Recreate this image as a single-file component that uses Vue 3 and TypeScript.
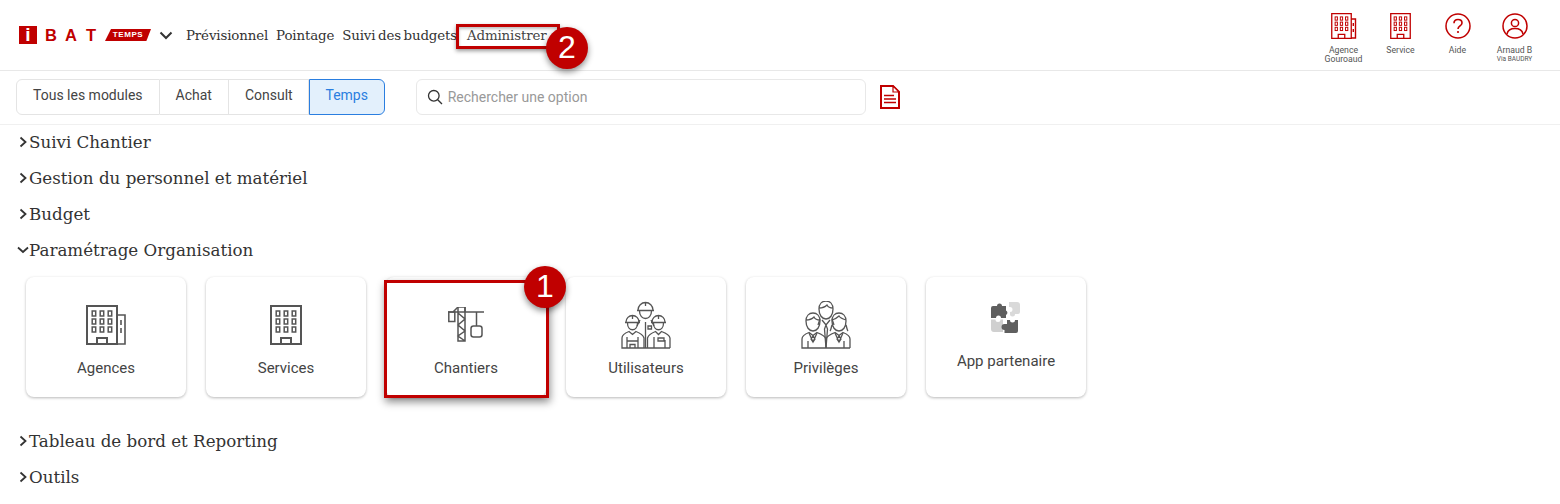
<template>
  <div class="page">
    <svg width="0" height="0" class="defs">
      <symbol id="tower" viewBox="0 0 32 40">
        <path d="M1 39V1h30v38z" fill="none" stroke="currentColor" stroke-width="2" />
        <path d="M11 39v-6h10v6" fill="none" stroke="currentColor" stroke-width="2" />
        <g fill="none" stroke="currentColor" stroke-width="1.5">
          <rect v-for="w in towerWindows" :key="w.k" :x="w.x" :y="w.y" width="3.5" height="5" />
        </g>
      </symbol>
    </svg>

    <header class="topbar">
      <div class="logo">
        <span class="logo__i">i</span>
        <span class="logo__bat">B</span>
        <span class="logo__bat">A</span>
        <span class="logo__bat">T</span>
        <span class="logo__tag">TEMPS</span>
      </div>
      <svg class="logo-caret" width="14" height="9" viewBox="0 0 14 9">
        <path d="M1.5 1.5 7 7l5.5-5.5" fill="none" stroke="#333" stroke-width="2" />
      </svg>
      <nav class="mainnav">
        <a v-for="n in navItems" :key="n">{{ n }}</a>
      </nav>

      <div class="userbox">
        <div class="userbox__item">
          <svg class="top-ico" width="26" height="26" viewBox="0 0 26 26">
            <use href="#tower" x="0" y="0" width="21" height="26" />
            <path d="M20 6h4.5v19H20M22.3 10v3M22.3 16v3" fill="none" stroke="currentColor" stroke-width="1.4" />
          </svg>
          <span>Agence</span>
          <span>Gouroaud</span>
        </div>
        <div class="userbox__item">
          <svg class="top-ico" width="26" height="26" viewBox="0 0 26 26">
            <use href="#tower" x="2" y="0" width="21" height="26" />
          </svg>
          <span>Service</span>
        </div>
        <div class="userbox__item">
          <svg class="top-ico" width="26" height="26" viewBox="0 0 26 26">
            <circle cx="13" cy="13" r="12" fill="none" stroke="currentColor" stroke-width="1.5" />
            <path d="M9 10.2C9 7.8 10.8 6.5 13 6.5s4 1.4 4 3.4c0 3-4 3-4 6.1" fill="none" stroke="currentColor" stroke-width="1.6" />
            <circle cx="13" cy="19" r="1.1" fill="currentColor" />
          </svg>
          <span>Aide</span>
        </div>
        <div class="userbox__item">
          <svg class="top-ico" width="26" height="26" viewBox="0 0 26 26">
            <circle cx="13" cy="13" r="12" fill="none" stroke="currentColor" stroke-width="1.5" />
            <circle cx="13" cy="10" r="3.6" fill="none" stroke="currentColor" stroke-width="1.5" />
            <path d="M5 21c.8-3.6 3.4-5.4 8-5.4s7.2 1.8 8 5.4" fill="none" stroke="currentColor" stroke-width="1.5" />
          </svg>
          <span>Arnaud B</span>
          <span class="small">Via BAUDRY</span>
        </div>
      </div>
    </header>

    <div class="toolbar">
      <div class="tabs">
        <button
          v-for="t in tabs"
          :key="t"
          class="tabs__btn"
          :class="{ 'tabs__btn--on': t === activeTab }"
          @click="activeTab = t"
        >{{ t }}</button>
      </div>
      <label class="search">
        <svg width="16" height="16" viewBox="0 0 16 16">
          <circle cx="6.8" cy="6.8" r="5.3" fill="none" stroke="#333" stroke-width="1.3" />
          <path d="m10.7 10.700 4.300 4.300" stroke="#333" stroke-width="1.3" />
        </svg>
        <input v-model="query" placeholder="Rechercher une option" />
      </label>
      <svg class="doc" width="20" height="24" viewBox="0 0 20 24">
        <path d="M1 1h12l6 6v16H1z" fill="none" stroke="#c00000" stroke-width="2" />
        <path d="M13 1v6h6z" fill="#fff" stroke="#c00000" stroke-width="1.2" />
        <path d="M4 10.500h10M4 14h12M4 17.500h12" stroke="#c00000" stroke-width="1.6" />
      </svg>
    </div>

    <main class="content">
      <section v-for="s in sections" :key="s.title" class="group">
        <h2 class="group__title" @click="s.open = !s.open">
          <svg v-if="s.open" class="caret" width="12" height="8" viewBox="0 0 12 8">
            <path d="M1 1.500 6 6l5-4.500" fill="none" stroke="#333" stroke-width="1.8" />
          </svg>
          <svg v-else class="caret" width="12" height="12" viewBox="0 0 12 12">
            <path d="M3.500 1.500 8.500 6l-5 4.500" fill="none" stroke="#333" stroke-width="1.8" />
          </svg>
          {{ s.title }}
        </h2>

        <div v-if="s.open" class="cards">
          <div class="card">
            <div class="card__ico">
              <svg width="40" height="40" viewBox="0 0 40 40">
                <use href="#tower" x="0" y="0" width="32" height="40" />
                <path d="M31 10h8v29h-8M35 15v5M35 23v5" fill="none" stroke="currentColor" stroke-width="1.6" />
              </svg>
            </div>
            <span>Agences</span>
          </div>
          <div class="card">
            <div class="card__ico">
              <svg width="32" height="40" viewBox="0 0 32 40">
                <use href="#tower" x="0" y="0" width="32" height="40" />
              </svg>
            </div>
            <span>Services</span>
          </div>
          <div class="card">
            <div class="card__ico">
              <svg width="36" height="36" viewBox="0 1 36 36">
                <g fill="none" stroke="currentColor" stroke-width="1.5">
                  <path d="M0 6h36M5 6l5-5h7v5" />
                  <rect x="0.800" y="6" width="6" height="9.500" />
                  <path d="M10 1v34h7V1M10 7l7 6-7 6 7 6-7 5 7 5" />
                  <path d="M28.500 6v14" />
                  <rect x="23" y="20" width="11" height="11" rx="2.500" />
                </g>
              </svg>
            </div>
            <span>Chantiers</span>
          </div>
          <div class="card">
            <div class="card__ico">
              <svg width="50" height="48" viewBox="0 0 50 48">
                <g fill="none" stroke="currentColor" stroke-width="1.300">
                  <path d="M17 9a7.500 7.500 0 0 1 15 0M16 9.500h17M18.500 10c0 10 12 10 12 0M24.500 2v3" />
                  <path d="M19 19l-3 6M30 19l3 6M24.500 21v26M27 25h3.500v3H27z" />
                  <path d="M5 21a6.500 6.500 0 0 1 13 0M4 21.500h15M6.500 22c0 9 10 9 10 0M11.500 15v3" />
                  <path d="M31 21a6.500 6.500 0 0 1 13 0M30 21.500h15M32.500 22c0 9 10 9 10 0M37.500 15v3" />
                  <path d="M1 47V37c0-3 3-5 7-6.500l3.500 3 3.500-3c4 1.500 7 3.500 8 6.500v10zM1 47h48" />
                  <path d="M26.500 47V37c1-3 4-5 8-6.500l3 3 3-3c4 1.500 8 3.500 8.500 6.500v10" />
                  <path d="M6 47V36M17 47V36M6 40h11M9 47v-3.500h5V47M33 47V36M44 47v-8M37 37h6v3h-6z" />
                </g>
              </svg>
            </div>
            <span>Utilisateurs</span>
          </div>
          <div class="card">
            <div class="card__ico">
              <svg width="50" height="48" viewBox="0 0 50 48">
                <g fill="none" stroke="currentColor" stroke-width="1.300">
                  <path d="M18 8c0-5 3-8 7-8s7 3 7 8c0 6-3 10-7 10s-7-4-7-10zM18 7c3 0 6-1 8-3 1 2 3 3 6 3" />
                  <path d="M19 18l-2 6M31 18l2 6M21 19l4 5 4-5M25 24l-1.500 4 1.500 19 1.500-19z" />
                  <path d="M5 20c0-5 3-8 7-8s7 3 7 8c0 6-3 10-7 10s-7-4-7-10zM5 19c3 0 6-1 8-3 1 2 3 3 6 3" />
                  <path d="M31 20c0-5 3-8 7-8s7 3 7 8c0 6-3 10-7 10s-7-4-7-10zM31 19c3-1 5-2 7-4 1 2 4 3 7 4M31 24c-1 3-1 5-2 6M45 24c1 3 1 5 2 6" />
                  <path d="M1 47V38c0-3 3-5 7-6.500l4 3 4-3c4 1.500 8 3.500 9 6.500v9zM1 47h48M25 38c1-3 5-5 9-6.500l4 3 4-3c4 1.500 7 3.500 7 6.500v9M7 47v-7M43 47v-7" />
                  <path d="m8 32 4 9 4-9M34 32l4 9 4-9M12 35l-2 3 2 3 2-3zM38 35l-2 3 2 3 2-3z" />
                </g>
              </svg>
            </div>
            <span>Privilèges</span>
          </div>
          <div class="card card--partner">
            <svg width="32" height="32" viewBox="0 0 32 32">
              <path d="M3 4h4a2.500 2.500 0 0 1 5 0h4v4.500a2.500 2.500 0 0 1 0 4.500V16h-5a2.500 2.500 0 0 0-5 0H1V6a2 2 0 0 1 2-2z" fill="#5f5f5f" />
              <path d="M19 0h8a3 3 0 0 1 3 3v7a2 2 0 0 1-2 2h-3a2.500 2.500 0 0 1-5 0v-2a2.500 2.500 0 0 0 0-5h-1V0z" fill="#d9d9d9" />
              <path d="M1 17.500h4.500a2.500 2.500 0 0 0 5 0H13v5a2.500 2.500 0 0 0 0 3.500v4H4a3 3 0 0 1-3-3z" fill="#d0d0d0" />
              <path d="M14.500 22H17v-4h3a2.500 2.500 0 0 0 5 0h3v11a2 2 0 0 1-2 2H14.500v-3a2.500 2.500 0 0 1 0-6z" fill="#5f5f5f" />
            </svg>
            <span>App partenaire</span>
          </div>
        </div>
      </section>
    </main>

    <!-- Annotations laid over the screenshot -->
    <div class="mark mark--nav"></div>
    <div class="mark mark--card"></div>
    <div class="badge badge--one">1</div>
    <div class="badge badge--two">2</div>
  </div>
</template>

<script setup lang="ts">
import { reactive, ref } from 'vue';

const navItems = ['Prévisionnel', 'Pointage', 'Suivi des budgets', 'Administrer'];
const tabs = ['Tous les modules', 'Achat', 'Consult', 'Temps'];
const activeTab = ref('Temps');
const query = ref('');

const sections = reactive([
  { title: 'Suivi Chantier', open: false },
  { title: 'Gestion du personnel et matériel', open: false },
  { title: 'Budget', open: false },
  { title: 'Paramétrage Organisation', open: true },
  { title: 'Tableau de bord et Reporting', open: false },
  { title: 'Outils', open: false },
]);

const towerWindows: { k: string; x: number; y: number }[] = [];
for (const y of [6, 14, 22]) {
  for (const x of [6.2, 14.2, 22.2]) towerWindows.push({ k: `${x}-${y}`, x, y });
}
</script>

<style>
html, body { margin: 0; background: #fff; }
</style>

<style scoped>
.page {
  position: relative;
  width: 1560px;
  height: 504px;
  overflow: hidden;
  background: #fff;
  font-family: Roboto, "Liberation Sans", sans-serif;
  color: #333;
}
.defs { position: absolute; }

.topbar {
  display: flex;
  align-items: center;
  height: 70px;
  padding: 0 17px 0 19px;
  border-bottom: 1px solid #e8e8e8;
}
.logo { display: flex; align-items: center; width: 132px; }
.logo__i {
  width: 18px; height: 18px;
  margin-right: 8px;
  background: #c00000;
  color: #fff;
  font: 700 19px/18px "Liberation Sans", sans-serif;
  text-align: center;
}
.logo__bat {
  width: 12px;
  margin-right: 8px;
  color: #c00000;
  font: 700 16.500px/18px "Liberation Sans", sans-serif;
  text-align: center;
}
.logo__tag {
  flex-shrink: 0;
  width: 46px;
  height: 12px;
  background: #c00000;
  clip-path: polygon(13% 0, 100% 0, 90% 100%, 0 100%);
  color: #fff;
  font: 700 8px/12px "Liberation Sans", sans-serif;
  letter-spacing: 0.6px;
  text-align: center;
}
.logo-caret { margin-left: 8px; }
.mainnav {
  display: flex;
  gap: 8px;
  margin-left: 13px;
  font-family: "DejaVu Serif", serif;
  font-size: 13.400px;
  letter-spacing: -0.15px;
  word-spacing: -1.500px;
  color: #333;
}
.mainnav a:last-child { margin-left: 2px; color: #444; }
.userbox { display: flex; margin-left: auto; align-self: flex-start; }
.userbox__item {
  width: 57px;
  padding-top: 13px;
  display: flex;
  flex-direction: column;
  align-items: center;
  font-size: 8.700px;
  line-height: 9px;
  color: #555;
}
.top-ico { color: #c00000; margin-bottom: 7px; }
.small { font-size: 6.500px; line-height: 8px; }

.toolbar {
  display: flex;
  align-items: center;
  height: 54px;
  padding-left: 16px;
  padding-bottom: 1px;
  box-sizing: border-box;
  border-bottom: 1px solid #f0f0f0;
}
.tabs { display: flex; height: 36px; }
.tabs__btn {
  height: 36px;
  padding: 0 16px 4px;
  background: #fff;
  border: 1px solid #e4e4e4;
  border-left: 0;
  font: 400 14px Roboto, sans-serif;
  color: #444;
}
.tabs__btn:first-child { border-left: 1px solid #e4e4e4; border-radius: 6px 0 0 6px; }
.tabs__btn:nth-child(3) { padding-right: 15px; }
.tabs__btn:last-child { border-radius: 0 6px 6px 0; }
.tabs__btn--on {
  width: 76px;
  padding: 0 0 4px;
  background: #e3f0fc;
  border: 1px solid #2a7ee0;
  color: #2a7ee0;
}
.search {
  display: flex;
  align-items: center;
  gap: 3px;
  width: 450px;
  height: 36px;
  margin-left: 31px;
  padding: 0 10px;
  box-sizing: border-box;
  border: 1px solid #e8e8e8;
  border-radius: 6px;
}
.search input {
  flex: 1;
  border: 0;
  outline: 0;
  font: 400 14px Roboto, sans-serif;
  color: #333;
  background: transparent;
}
.search input::placeholder { color: #999; opacity: 1; }
.doc { margin-left: 14px; }

.content { margin-top: -1px; }
.group__title {
  display: flex;
  align-items: center;
  height: 36px;
  margin: 0;
  padding-left: 17px;
  font-family: "DejaVu Serif", serif;
  font-weight: 400;
  font-size: 16.700px;
  color: #333;
  cursor: pointer;
}
.caret { flex-shrink: 0; }

.cards {
  display: flex;
  gap: 20px;
  padding: 9px 0 26px 26px;
}
.card {
  width: 160px;
  height: 120px;
  flex-shrink: 0;
  display: flex;
  flex-direction: column;
  align-items: center;
  padding-top: 23px;
  box-sizing: border-box;
  background: #fff;
  border-radius: 8px;
  box-shadow: 0 1px 3px rgba(0,0,0,0.28);
  font-size: 15px;
  color: #444;
}
.card span { line-height: 18px; }
.card__ico {
  display: flex;
  align-items: center;
  justify-content: center;
  height: 50px;
  margin-bottom: 9px;
  color: #555;
}
.card--partner { padding-top: 25px; }
.card--partner svg { margin-bottom: 18px; }

.mark {
  position: absolute;
  box-sizing: border-box;
  border: 3px solid #c00000;
  box-shadow: 1px 4px 8px rgba(0,0,0,0.45);
}
.mark--nav {
  left: 456px; top: 24px; width: 104px; height: 25px;
  box-shadow: 0 2px 4px rgba(0,0,0,0.4), inset 0 2px 3px rgba(0,0,0,0.25);
}
.mark--card { left: 384px; top: 280px; width: 165px; height: 118px; }
.badge {
  position: absolute;
  width: 42px;
  height: 42px;
  border-radius: 50%;
  background: #c00000;
  color: #fff;
  font: 400 32px/41px "Liberation Sans", sans-serif;
  text-align: center;
  box-shadow: 0 3px 6px rgba(0,0,0,0.45);
}
.badge--one { left: 524px; top: 266px; }
.badge--two { left: 546px; top: 27px; }
</style>
